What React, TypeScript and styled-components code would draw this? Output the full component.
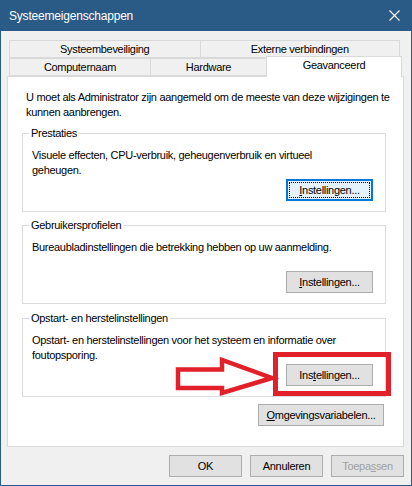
import React from "react";
import styled, { createGlobalStyle } from "styled-components";

const Global = createGlobalStyle`
  html, body { margin: 0; padding: 0; background: #f0f0f0; }
  #root { width: 412px; height: 486px; }
  * { box-sizing: border-box; }
`;

const FONT = `"Liberation Sans", Arial, sans-serif`;

const Window = styled.div`
  position: relative;
  width: 412px;
  height: 486px;
  background: #f0f0f0;
  border: 1px solid #2a5a86;
  border-top: none;
  font-family: ${FONT};
  font-size: 11px;
  letter-spacing: -0.3px;
  color: #000;
  display: flex;
  flex-direction: column;
`;

const TitleBar = styled.div`
  height: 31px;
  margin: 0 -1px;
  background: #2a5a86;
  color: #fff;
  display: flex;
  align-items: center;
  justify-content: space-between;
  padding: 0 12px 0 9px;
  font-size: 12px;
  letter-spacing: -0.2px;
  flex-shrink: 0;
`;

const Body = styled.div`
  padding: 9px 7px 0 6px;
  display: flex;
  flex-direction: column;
`;

const TabRow = styled.div<{ $back?: boolean }>`
  display: flex;
  height: 18px;
  margin-left: 2px;
  margin-right: ${(p) => (p.$back ? "4px" : "2px")};
`;

const Tab = styled.div<{ $w: number; $active?: boolean }>`
  width: ${(p) => p.$w}px;
  height: ${(p) => (p.$active ? "21px" : "18px")};
  margin-top: ${(p) => (p.$active ? "-2px" : "0")};
  margin-left: -1px;
  background: ${(p) => (p.$active ? "#fff" : "#f0f0f0")};
  border: 1px solid #d9d9d9;
  border-bottom: ${(p) => (p.$active ? "none" : "1px solid #d9d9d9")};
  display: flex;
  align-items: ${(p) => (p.$active ? "flex-start" : "center")};
  padding-top: ${(p) => (p.$active ? "2px" : "0")};
  justify-content: center;
  position: relative;
  z-index: ${(p) => (p.$active ? 2 : 1)};
  &:first-child { margin-left: 0; }
`;

const Panel = styled.div`
  height: 371px;
  background: #fff;
  border: 1px solid #d9d9d9;
  padding: 13px 0 0 14px;
  display: flex;
  flex-direction: column;
  align-items: flex-start;
`;

const Intro = styled.p`
  margin: 0 0 0 4px;
  width: 378px;
  line-height: 15px;
`;

const Group = styled.fieldset<{ $gap: number }>`
  width: 364px;
  height: 86px;
  margin: ${(p) => p.$gap}px 0 0 0;
  padding: 0 12px 0 9px;
  border: 1px solid #dcdcdc;
  display: flex;
  flex-direction: column;
  align-items: flex-end;
`;

const Legend = styled.legend`
  padding: 0 2px;
  margin-left: -3px;
  line-height: 14px;
`;

const GroupText = styled.div`
  align-self: flex-start;
  width: 322px;
  margin-top: 8px;
  height: 30px;
  line-height: 15px;
`;

const Button = styled.div<{ $w: number; $focus?: boolean; $disabled?: boolean }>`
  width: ${(p) => p.$w}px;
  height: 22px;
  background: ${(p) => (p.$focus ? "#e5f1fb" : "#e1e1e1")};
  border: 1px solid ${(p) => (p.$focus ? "#0078d7" : "#adadad")};
  color: ${(p) => (p.$disabled ? "#a0a0a0" : "#000")};
  display: flex;
  align-items: center;
  justify-content: center;
  position: relative;
  flex-shrink: 0;
  ${(p) =>
    p.$focus
      ? `box-shadow: inset 0 0 0 1px #0078d7; &::after { content: ""; position: absolute; inset: 2px; border: 1px dotted #000; }`
      : ""}
`;

const GroupButton = styled(Button)`
  margin-top: 1px;
`;

const EnvButton = styled(Button)`
  margin: 7px 0 0 236px;
`;

const Footer = styled.div`
  display: flex;
  justify-content: flex-end;
  gap: 8px;
  margin-top: 8px;
`;

const Key = styled.span`
  text-decoration: underline;
  text-underline-offset: 1px;
`;

const RedBox = styled.div`
  position: absolute;
  left: 272px;
  top: 352px;
  width: 118px;
  height: 44px;
  border: 5px solid #e1202a;
  z-index: 5;
`;

const ArrowSvg = styled.svg`
  position: absolute;
  left: 170px;
  top: 352px;
  z-index: 5;
`;

const CloseIcon = () => (
  <svg width="11" height="11" viewBox="0 0 11 11">
    <path d="M0.5 0.5 L10.5 10.5 M10.5 0.5 L0.5 10.5" stroke="#fff" strokeWidth="1.1" />
  </svg>
);

export default function App() {
  return (
    <>
      <Global />
      <Window>
        <TitleBar>
          <span>Systeemeigenschappen</span>
          <CloseIcon />
        </TitleBar>
        <Body>
          <TabRow $back>
            <Tab $w={192}>Systeembeveiliging</Tab>
            <Tab $w={201}>Externe verbindingen</Tab>
          </TabRow>
          <TabRow>
            <Tab $w={142}>Computernaam</Tab>
            <Tab $w={117}>Hardware</Tab>
            <Tab $w={136} $active>Geavanceerd</Tab>
          </TabRow>
          <Panel>
            <Intro>
              U moet als Administrator zijn aangemeld om de meeste van deze wijzigingen te kunnen aanbrengen.
            </Intro>
            <Group $gap={6}>
              <Legend>Prestaties</Legend>
              <GroupText>Visuele effecten, CPU-verbruik, geheugenverbruik en virtueel geheugen.</GroupText>
              <GroupButton $w={87} $focus>
                <span><Key>I</Key>nstellingen...</span>
              </GroupButton>
            </Group>
            <Group $gap={6}>
              <Legend>Gebruikersprofielen</Legend>
              <GroupText>Bureaubladinstellingen die betrekking hebben op uw aanmelding.</GroupText>
              <GroupButton $w={87}>
                <span><Key>I</Key>nstellingen...</span>
              </GroupButton>
            </Group>
            <Group $gap={7}>
              <Legend>Opstart- en herstelinstellingen</Legend>
              <GroupText>Opstart- en herstelinstellingen voor het systeem en informatie over foutopsporing.</GroupText>
              <GroupButton $w={87}>
                <span>Ins<Key>t</Key>ellingen...</span>
              </GroupButton>
            </Group>
            <EnvButton $w={126}>
              <span><Key>O</Key>mgevingsvariabelen...</span>
            </EnvButton>
          </Panel>
          <Footer>
            <Button $w={73}>OK</Button>
            <Button $w={73}>Annuleren</Button>
            <Button $w={73} $disabled>
              <span>Toepa<Key>s</Key>sen</span>
            </Button>
          </Footer>
        </Body>
        <ArrowSvg width="110" height="46" viewBox="170 352 110 46">
          <polygon
            points="177,369.5 221,369.5 221,360 271,378 221,393 221,388 177,388"
            fill="#fff"
            stroke="#e1202a"
            strokeWidth="4.5"
            strokeLinejoin="miter"
          />
        </ArrowSvg>
        <RedBox />
      </Window>
    </>
  );
}
